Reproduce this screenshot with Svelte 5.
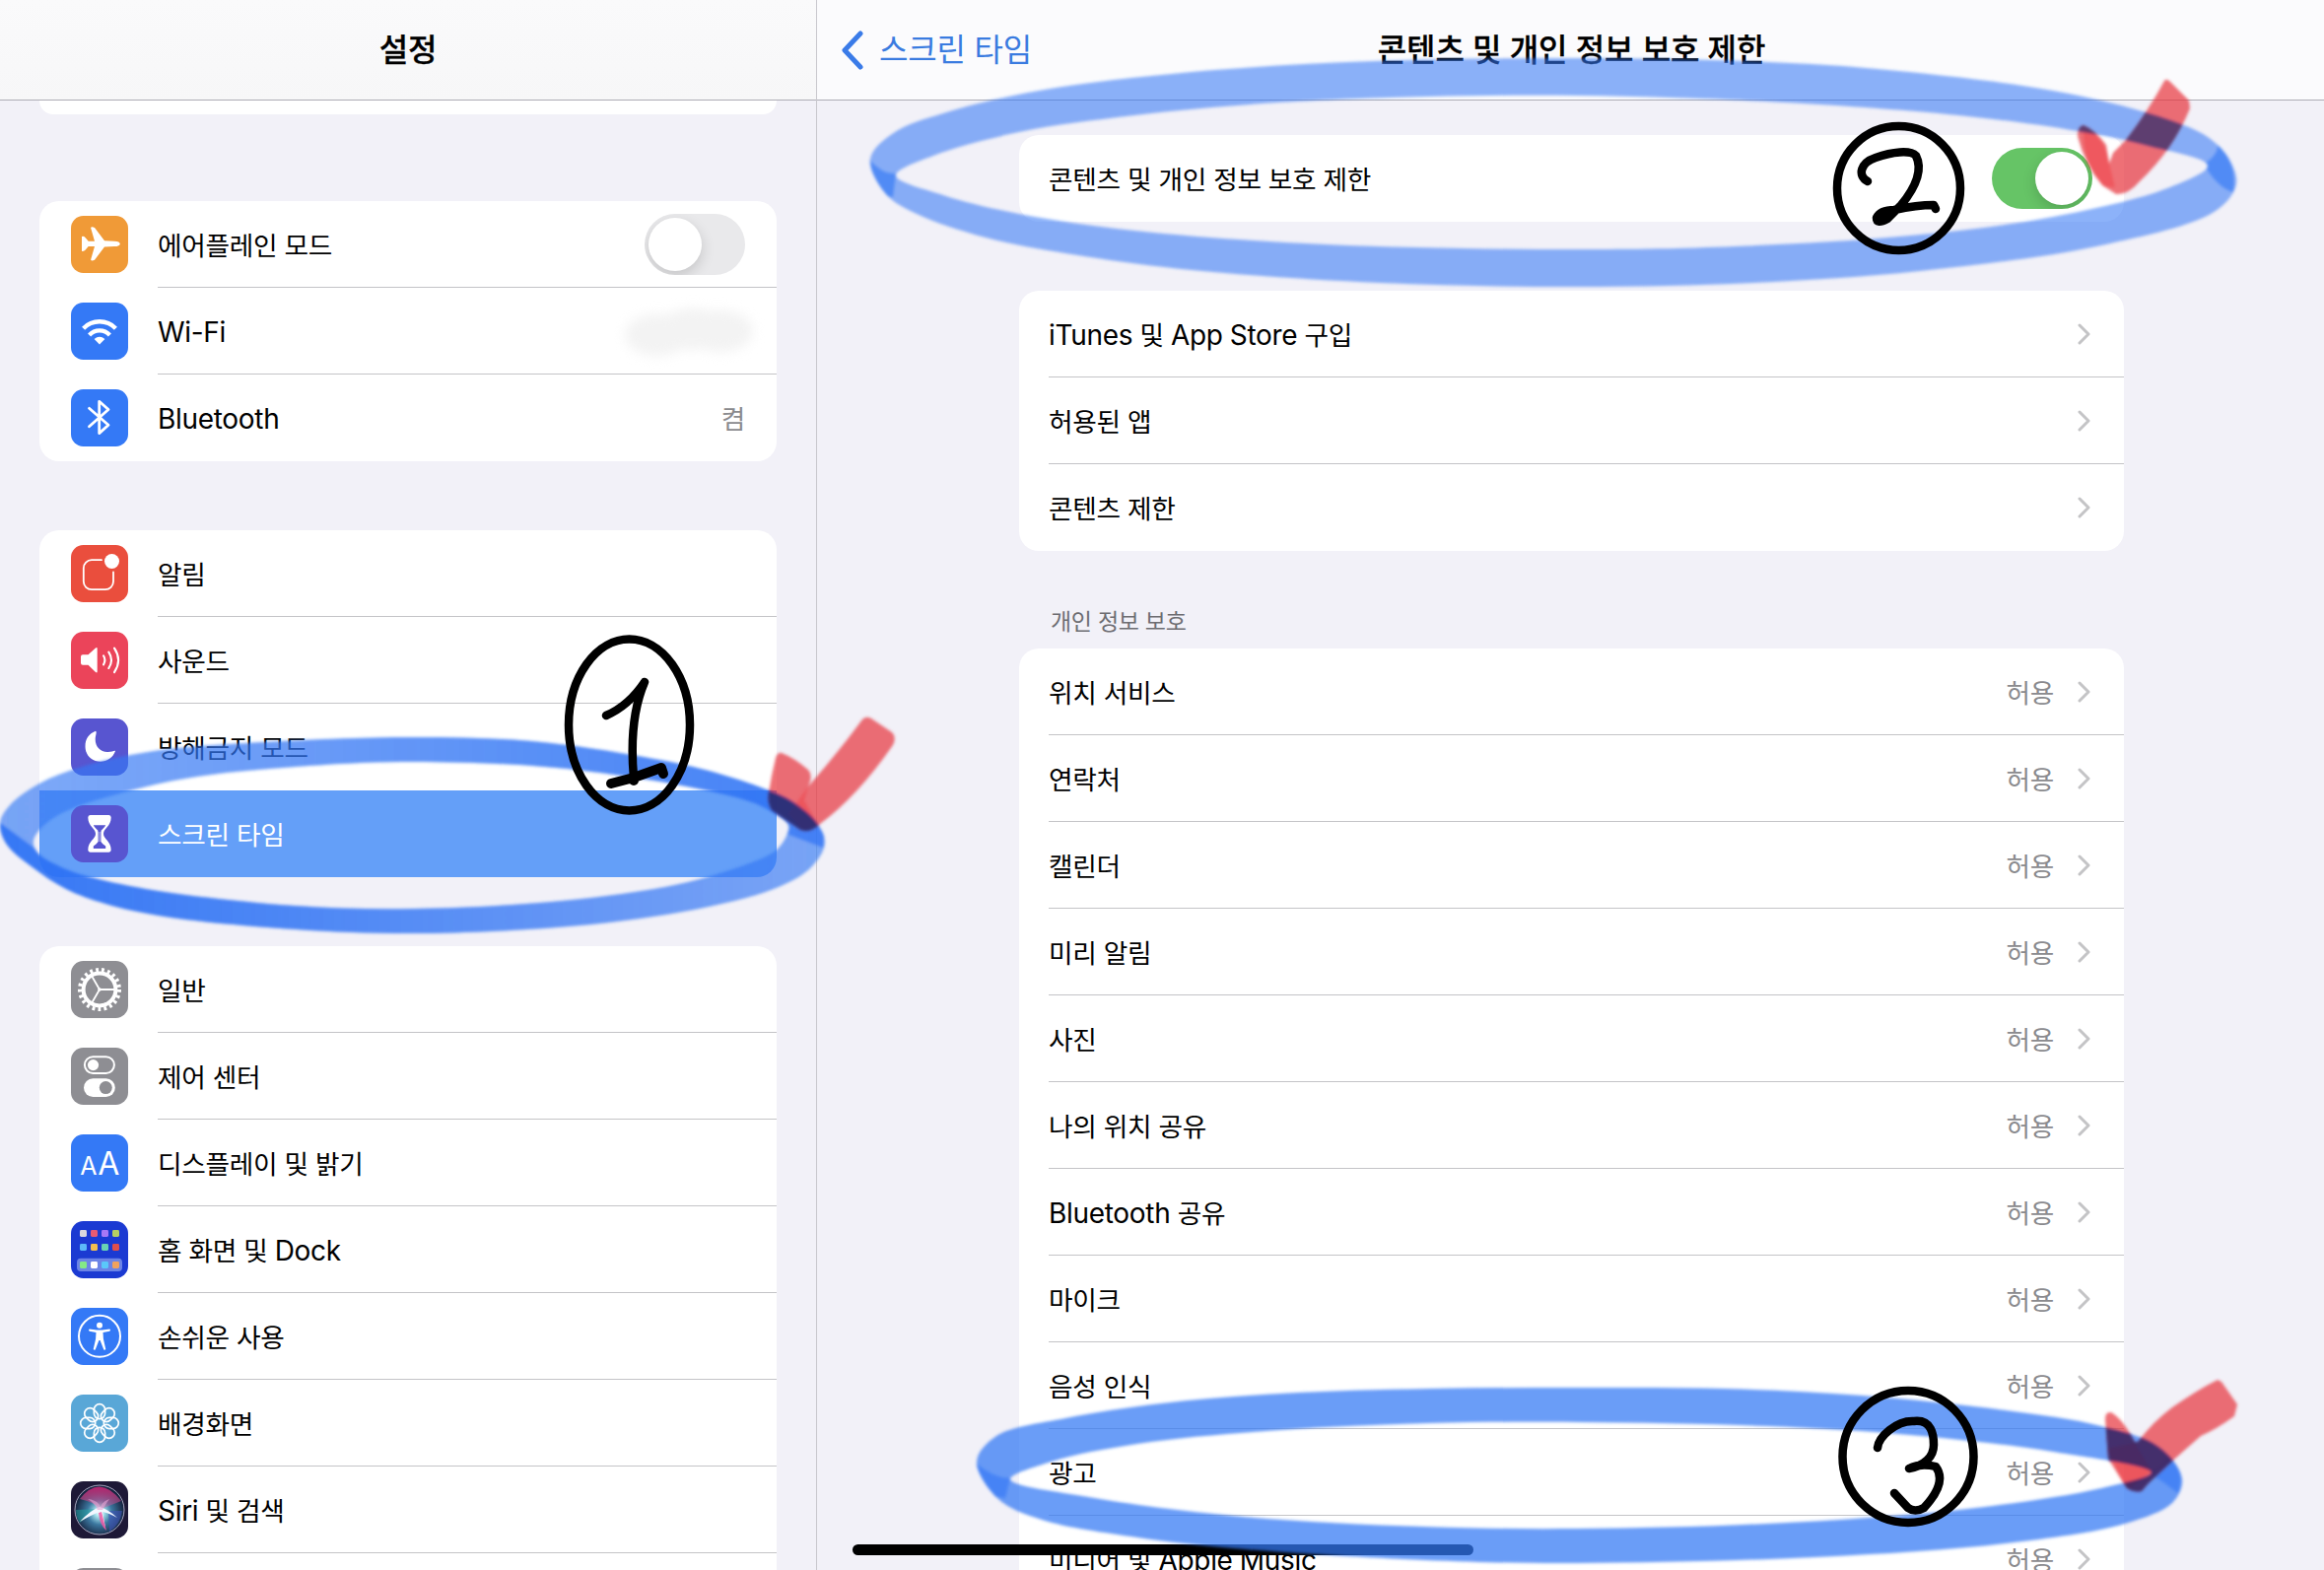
<div class="screen">
  <aside class="sidebar">
    <header class="bar">
      <h1>설정</h1>
    </header>
    <div class="sidebar-list">
      <div class="card card-cut"></div>
      {#each menu as group}
        <ul class="card">
          {#each group as item}
            <li class="row" class:selected={item.selected}>
              <svg class="icon" viewBox="0 0 58 58">
                <rect width="58" height="58" rx="12.5" fill={item.color} />
                {#if item.icon === 'plane'}
                  <path
                    fill="#fff"
                    d="M11 21q2-.7 3.5 1l3.2 3.8H24l-3.8-13.2q-.3-1.5 1.6-1.4l2.2.8 10 13.3 10 .4q5.8.3 5.8 2.700t-5.800 2.700l-10 .4-10 13.300-2.200.8q-1.900 0-1.600-1.400L24 31h-6.300l-3.200 3.800q-1.500 1.500-3.500 1z"
                  />
                {:else if item.icon === 'wifi'}
                  <g fill="none" stroke="#fff" stroke-width="4.3">
                    <path d="M12.6 26.2a22.8 22.8 0 0 1 32.8 0" />
                    <path d="M18.6 33a14.2 14.2 0 0 1 20.8 0" />
                  </g>
                  <path fill="#fff" d="M23.6 37q5.4-4.6 10.8 0L29 42.5z" />
                {:else if item.icon === 'bluetooth'}
                  <path
                    class="line"
                    stroke-width="2.8"
                    d="M18.5 19.3L38 36.3l-9.300 8.300V12.300L38 20.500 18.500 37.800"
                  />
                {:else if item.icon === 'bell'}
                  <path
                    class="line"
                    stroke-width="1.8"
                    d="M31 15.2H21a8.200 8.200 0 0 0-8.200 8.200V37A8.200 8.200 0 0 0 21 45.200h13.800A8.200 8.200 0 0 0 43 37V27.500"
                  />
                  <circle cx="41.5" cy="16.5" r="7.500" fill="#fff" />
                {:else if item.icon === 'sound'}
                  <path
                    fill="#fff"
                    d="M12 23.200h5.500l7.500-6.700q1.700-1.100 1.700.8v22.900q0 1.900-1.700.8l-7.500-7.200H12q-2 0-2-2v-6.600q0-2 2-2z"
                  />
                  <g class="line" stroke-width="2.1">
                    <path d="M33 24.300q2.800 4.500 0 9.100" />
                    <path d="M38.300 20.600q5.400 8.200 0 16.400" />
                    <path d="M44 16.600q8.200 12.200 0 24.500" />
                  </g>
                {:else if item.icon === 'moon'}
                  <path
                    fill="#fff"
                    d="M25 12.800C18 15.500 14.500 21 14.500 28.200c0 9 6.500 15.600 15.500 15.600 7 0 12.800-4.300 15-10.800-1-.9-3.500 1.300-8 1.100-7.500-.2-12.300-5.600-12.300-13.100 0-4 2-7.300.3-8.200z"
                  />
                {:else if item.icon === 'hourglass'}
                  <path
                    fill="#fff"
                    d="M19.500 10h19q2.200 0 2.200 2.500c0 9-7.700 11-7.700 16.400s7.700 7.400 7.700 16.400q0 2.400-2.200 2.400h-19q-2.200 0-2.200-2.400c0-9 7.700-11 7.700-16.400s-7.700-7.400-7.700-16.400Q17.300 10 19.500 10z"
                  />
                  <path
                    fill={item.color}
                    d="M22.800 20.200h12.400q-.7 1.600-4.600 5.600v11.400q1 1.800 4.600 4.200v2.500H22.800v-2.500q3.600-2.400 4.600-4.200V25.800q-3.900-4-4.600-5.600z"
                  />
                  <path stroke="#fff" stroke-width=".6" d="M28 27v10M30 27v10" />
                {:else if item.icon === 'gear'}
                  <g fill="none" stroke="#fff">
                    <circle cx="29" cy="29" r="16.400" stroke-width="4" />
                    <circle
                      cx="29"
                      cy="29"
                      r="20"
                      stroke-width="4"
                      stroke-dasharray="2.800 3.184"
                    />
                    <path
                      stroke-width="1.800"
                      d="M29 29h15M29 29l-7.500-13M29 29l-7.500 13"
                    />
                  </g>
                  <circle cx="29" cy="29" r="1.800" fill="#fff" />
                {:else if item.icon === 'switches'}
                  <rect class="line" x="13.900" y="9.200" width="30" height="16.800" rx="8.400" stroke-width="2" />
                  <circle cx="22.500" cy="17.600" r="5.600" fill="#fff" />
                  <rect x="13" y="31.300" width="31.800" height="18.700" rx="9.300" fill="#fff" />
                  <circle cx="35.300" cy="40.600" r="6.500" fill={item.color} />
                {:else if item.icon === 'text'}
                  <text x="9.200" y="41" font-size="25">A</text>
                  <text x="27.200" y="41" font-size="32">A</text>
                {:else if item.icon === 'home'}
                  <rect x="6" y="37.700" width="46" height="13.300" rx="4" fill="#6c84e6" />
                  {#each apps as app, i}
                    <rect
                      x={9 + (i % 4) * 11}
                      y={[9, 23, 41][Math.floor(i / 4)]}
                      width="7"
                      height="7"
                      rx="1.400"
                      fill={app}
                    />
                  {/each}
                {:else if item.icon === 'person'}
                  <circle class="line" cx="29" cy="28.800" r="21" stroke-width="2" />
                  <circle cx="29" cy="17.700" r="3" fill="#fff" />
                  <path
                    fill="#fff"
                    d="M18.700 21.500l7.500 1h5.600l7.500-1q1.500.9 0 2.300l-6.800 1.200.4 6.500 2.400 10.500q-1 1.500-2.100.2L29.600 33h-1.200l-3.600 9.200q-1.100 1.300-2.100-.2l2.400-10.500.4-6.500-6.800-1.200q-1.500-1.400 0-2.300z"
                  />
                {:else if item.icon === 'flower'}
                  {#each [0, 45, 90, 135, 180, 225, 270, 315] as angle}
                    <rect
                      class="line"
                      x="23.400"
                      y="9.700"
                      width="11.200"
                      height="15"
                      rx="5.600"
                      stroke-width="1.700"
                      transform="rotate({angle} 29 29)"
                    />
                  {/each}
                {:else if item.icon === 'siri'}
                  <defs>
                    <radialGradient id="orb" cx=".5" cy=".55" r=".5">
                      <stop offset="0" stop-color="#fff" />
                      <stop offset=".18" stop-color="#a9e5ee" />
                      <stop offset=".5" stop-color="#3c78a0" />
                      <stop offset="1" stop-color="#15233f" />
                    </radialGradient>
                    <linearGradient id="pink" x2="0" y2="1">
                      <stop offset="0" stop-color="#b52670" />
                      <stop offset="1" stop-color="#dd5b9c" stop-opacity=".3" />
                    </linearGradient>
                  </defs>
                  <circle cx="29" cy="29" r="25" fill="url(#orb)" />
                  <path fill="url(#pink)" d="M9 18Q29-8 51 20q-10 4-20 8-10-8-22-10z" />
                  <path fill="#3f54b8" opacity=".6" d="M38 30l14 0q-2 14-13 21z" />
                  <path fill="#22a9a5" opacity=".5" d="M27 28L5 29q0 8 4 13z" />
                  <path fill="#f2f7ff" d="M9 41Q20 29 29 26q10 3 18 11-9-5-15-6l3 16Q31 38 29 31q-8 3-20 10z" />
                  <path fill="#f05ba6" opacity=".85" d="M31 31l5 19q-7-6-8-18z" />
                  <path fill="#e8a3d3" opacity=".6" d="M17 18q10 1 13 8 2-6 9-8-5 7-7 11h-5q-3-7-10-11z" />
                  <circle cx="29" cy="29" r="25" fill="none" stroke="#a8a6bf" stroke-width="1" />
                {/if}
              </svg>
              <div class="row-body">
                {@render text(item.label)}
                {#if item.toggle}
                  <span class="switch"><i></i></span>
                {:else if item.smudge}
                  <span class="smudge"><i></i><i></i><i></i></span>
                {:else if item.value}
                  <span class="value">{item.value}</span>
                {/if}
              </div>
            </li>
          {/each}
        </ul>
      {/each}
    </div>
  </aside>

  <main class="detail">
    <header class="bar detail-bar">
      <a class="back" href="#back">
        <svg viewBox="0 0 24 40"><path d="M20 3L4 20l16 17" /></svg>
        스크린 타임
      </a>
      <h1>콘텐츠 및 개인 정보 보호 제한</h1>
    </header>
    <div class="detail-list">
      <div class="card">
        <div class="row">
          <div class="row-body">
            {@render text('콘텐츠 및 개인 정보 보호 제한')}
            <span class="switch on"><i></i></span>
          </div>
        </div>
      </div>
      <ul class="card">
        {#each store as label}
          <li class="row">
            <div class="row-body">
              {@render text(label)}
              <svg class="chevron" viewBox="0 0 14 22"><path d="M2 2l9 9-9 9" /></svg>
            </div>
          </li>
        {/each}
      </ul>
      <h2>개인 정보 보호</h2>
      <ul class="card">
        {#each privacy as label}
          <li class="row">
            <div class="row-body">
              {@render text(label)}
              <span class="value">허용</span>
              <svg class="chevron" viewBox="0 0 14 22"><path d="M2 2l9 9-9 9" /></svg>
            </div>
          </li>
        {/each}
      </ul>
    </div>
  </main>

  <div class="home-bar"></div>

  <!-- marker strokes on top of the screen -->
  <svg class="marks" viewBox="0 0 2358 1593">
    <defs>
      <filter id="soft" x="-5%" y="-5%" width="110%" height="110%">
        <feGaussianBlur stdDeviation="1.8" />
      </filter>
      {#each rings as ring, i}
        <clipPath id="ring{i}">
          <path clip-rule="evenodd" d={smooth(ring.outer) + smooth(ring.inner)} />
        </clipPath>
      {/each}
      <linearGradient id="to-right">
        <stop offset="0" stop-color="#2b70f4" stop-opacity="0" />
        <stop offset=".5" stop-color="#2b70f4" stop-opacity=".35" />
        <stop offset="1" stop-color="#2b70f4" stop-opacity=".7" />
      </linearGradient>
      <linearGradient id="to-left">
        <stop offset="0" stop-color="#2b70f4" stop-opacity=".85" />
        <stop offset=".5" stop-color="#2b70f4" stop-opacity=".45" />
        <stop offset="1" stop-color="#2b70f4" stop-opacity="0" />
      </linearGradient>
    </defs>
    {#each rings as ring, i}
      <g filter="url(#soft)">
        <path
          fill-rule="evenodd"
          fill="#3478f4"
          fill-opacity={ring.opacity}
          d={smooth(ring.outer) + smooth(ring.inner)}
        />
        {#each ring.shades as shade}
          <path fill={shade.fill} clip-path="url(#ring{i})" d={shade.d} />
        {/each}
      </g>
    {/each}
    {#each checks as check, i}
      <g filter="url(#soft)">
        <path fill="#e7343d" fill-opacity=".7" d={check.shape} />
        <path fill="#f0282d" fill-opacity=".35" d={check.fold} />
        <path fill={check.mix} clip-path="url(#ring{i})" d={check.shape} />
      </g>
    {/each}
    <g class="ink">
      <ellipse cx="638.5" cy="735.5" rx="61.5" ry="87" />
      <path d="M615 726Q638 716 654 692C642 720 640 755 643 789" />
      <path stroke-width="10" d="M620 795L643 789 671 779 673 785M643 789v3" />
      <ellipse cx="1926.5" cy="191" rx="62.5" ry="63" />
      <path
        d="M1895 184C1884 178 1888 165 1903 160 1920 154 1938 152 1944 158 1952 174 1942 192 1929 208L1915 222Q1904 228 1904 221 1908 213 1922 213 1945 208 1962 208L1964 212"
      />
      <ellipse cx="1936" cy="1478" rx="66.5" ry="67" />
      <path
        d="M1905 1469C1906 1458 1924 1441 1942 1442 1960 1440 1962 1456 1962 1466 1962 1478 1953 1487 1937 1490 1945 1486 1956 1486 1964 1488 1973 1500 1966 1515 1952 1530Q1943 1535 1936 1530L1922 1515"
      />
    </g>
  </svg>
</div>

{#snippet text(label)}
  <span class="label">{#each label.split(/([A-Za-z-]+)/) as part, i}<span class:latin={i % 2}>{part}</span>{/each}</span>
{/snippet}

<script>
  const menu = [
    [
      { icon: 'plane', color: '#f09a37', label: '에어플레인 모드', toggle: true },
      { icon: 'wifi', color: '#3479f6', label: 'Wi-Fi', smudge: true },
      { icon: 'bluetooth', color: '#3479f6', label: 'Bluetooth', value: '켬' },
    ],
    [
      { icon: 'bell', color: '#ea4e3d', label: '알림' },
      { icon: 'sound', color: '#eb445a', label: '사운드' },
      { icon: 'moon', color: '#5855d0', label: '방해금지 모드' },
      { icon: 'hourglass', color: '#5855d0', label: '스크린 타임', selected: true },
    ],
    [
      { icon: 'gear', color: '#8e8e93', label: '일반' },
      { icon: 'switches', color: '#8e8e93', label: '제어 센터' },
      { icon: 'text', color: '#3479f6', label: '디스플레이 및 밝기' },
      { icon: 'home', color: '#1b3ad2', label: '홈 화면 및 Dock' },
      { icon: 'person', color: '#3479f6', label: '손쉬운 사용' },
      { icon: 'flower', color: '#59a7d7', label: '배경화면' },
      { icon: 'siri', color: '#1e1937', label: 'Siri 및 검색' },
      { icon: 'blank', color: '#8e8e93', label: '' },
    ],
  ];

  const apps = [
    '#d9d9de', '#e85b73', '#a878f6', '#b6cf63',
    '#5cb9f9', '#f3c04f', '#69d3b3', '#e04f4b',
    '#84e987', '#ffffff', '#5ac8fa', '#f1a25e',
  ];

  const store = ['iTunes 및 App Store 구입', '허용된 앱', '콘텐츠 제한'];

  const privacy = [
    '위치 서비스',
    '연락처',
    '캘린더',
    '미리 알림',
    '사진',
    '나의 위치 공유',
    'Bluetooth 공유',
    '마이크',
    '음성 인식',
    '광고',
    '미디어 및 Apple Music',
  ];

  const rings = [
    {
      opacity: 0.64,
      outer: [
        [0, 835], [10, 817], [40, 795], [83, 778], [150, 763], [233, 755],
        [408, 748], [540, 752], [653, 768], [719, 782], [780, 802], [803, 813],
        [827, 833], [837, 855], [823, 880], [790, 900], [719, 920], [600, 938],
        [430, 947], [300, 943], [167, 930], [107, 917], [67, 902], [33, 880],
        [7, 857],
      ],
      inner: [
        [34, 853], [44, 838], [67, 823], [133, 802], [200, 788], [300, 778],
        [408, 773], [540, 777], [630, 787], [707, 800], [760, 813], [780, 822],
        [800, 837], [798, 848], [787, 863], [760, 876], [689, 897], [570, 914],
        [420, 922], [300, 919], [167, 905], [100, 892], [67, 882], [38, 865],
      ],
      shades: [
        { fill: 'url(#to-right)', d: 'M0 835L45 868H400L798 846 835 860 845 740H0z' },
        { fill: 'url(#to-left)', d: 'M0 835L45 868H400L798 846 835 860 840 950H0z' },
      ],
    },
    {
      opacity: 0.57,
      outer: [
        [883, 161], [908, 134], [957, 115], [1054, 92], [1209, 73], [1393, 62],
        [1600, 59], [1770, 62], [1905, 70], [2083, 92], [2190, 118], [2240, 139],
        [2262, 162], [2269, 187], [2248, 214], [2132, 249], [1948, 275],
        [1779, 287], [1600, 291], [1400, 287], [1209, 274], [1100, 260],
        [1000, 241], [930, 217], [899, 197],
      ],
      inner: [
        [909, 178], [947, 158], [1034, 134], [1151, 117], [1296, 104], [1450, 98],
        [1600, 97], [1793, 103], [1987, 117], [2108, 133], [2180, 148], [2240, 168],
        [2199, 191], [2083, 220], [1938, 239], [1760, 250], [1600, 253],
        [1345, 248], [1151, 234], [1034, 217], [957, 198],
      ],
      shades: [
        { fill: '#2f74f599', d: 'M880 160Q896 178 909 176L906 200 896 198Q884 182 880 160z' },
        { fill: '#2f74f599', d: 'M2236 166Q2249 160 2251 146 2270 166 2266 195 2249 190 2236 166z' },
      ],
    },
    {
      opacity: 0.73,
      outer: [
        [991, 1483], [1011, 1457], [1081, 1439], [1178, 1424], [1299, 1414],
        [1450, 1409], [1600, 1408], [1750, 1409], [1890, 1416], [2035, 1431],
        [2132, 1447], [2190, 1468], [2214, 1500], [2205, 1524], [2156, 1546],
        [2035, 1566], [1842, 1580], [1600, 1586], [1445, 1583], [1251, 1571],
        [1154, 1560], [1057, 1542], [1013, 1521],
      ],
      inner: [
        [1025, 1501], [1067, 1483], [1154, 1465], [1299, 1451], [1450, 1444],
        [1600, 1443], [1793, 1447], [1938, 1456], [2083, 1473], [2183, 1494],
        [2132, 1510], [1987, 1532], [1793, 1546], [1600, 1551], [1445, 1549],
        [1251, 1538], [1105, 1519],
      ],
      shades: [
        { fill: '#2f74f599', d: 'M988 1483Q1008 1500 1025 1500L1020 1520 1008 1518Q996 1500 988 1483z' },
        { fill: '#2f74f599', d: 'M2180 1494Q2197 1490 2199 1472 2218 1492 2210 1515 2196 1504 2180 1494z' },
      ],
    },
  ];

  const checks = [
    {
      mix: '#0c2a7ccc',
      shape:
        'M793 764Q806 769 820 781 824 785 822 793L820 798Q850 764 875 730 879 726 884 729L905 743Q910 748 906 756 870 808 832 836 822 846 812 842L783 822Q778 814 780 804 783 785 787 769 789 763 793 764z',
      fold: 'M820 798L800 826 815 842 830 838 816 812z',
    },
    {
      mix: '#34356fb8',
      shape:
        'M2114 127Q2126 132 2137 147L2140 166 2144 155 2157 142Q2180 112 2196 82 2198 79 2202 83L2221 102 2222 110Q2205 152 2171 184 2159 198 2147 197L2133 188Q2115 167 2108 138 2108 128 2114 127z',
      fold: 'M2114 128Q2137 140 2140 166L2146 190 2135 189Q2112 166 2114 128z',
    },
    {
      mix: '#0c2268b0',
      shape:
        'M2142 1433Q2154 1440 2166 1463L2169 1463Q2185 1442 2204 1428 2230 1410 2250 1400L2254 1402 2270 1425 2267 1437Q2249 1450 2233 1457 2206 1480 2180 1505L2173 1513Q2166 1515 2158 1510L2154 1504 2139 1480 2136 1440Q2136 1432 2142 1433z',
      fold: 'M2138 1470L2154 1504 2160 1511 2183 1493 2166 1464z',
    },
  ];

  // closed centripetal catmull-rom curve through the points
  function smooth(points) {
    const n = points.length;
    const dist = (p, q) => Math.hypot(p[0] - q[0], p[1] - q[1]);
    const handle = (far, near, next, d1, d2) =>
      [0, 1].map((k) => {
        const r1 = Math.sqrt(d1);
        const r2 = Math.sqrt(d2);
        const mid = (2 * d1 + 3 * r1 * r2 + d2) * near[k];
        return ((d1 * next[k] - d2 * far[k] + mid) / (3 * r1 * (r1 + r2))).toFixed(1);
      });

    let d = `M${points[0]}`;
    for (let i = 0; i < n; i++) {
      const [a, b, c, e] = [-1, 0, 1, 2].map((k) => points[(i + k + n) % n]);
      const d1 = dist(a, b);
      const d2 = dist(b, c);
      const d3 = dist(c, e);
      d += `C${handle(a, b, c, d1, d2)} ${handle(e, c, b, d3, d2)} ${c}`;
    }
    return d + 'Z';
  }
</script>

<style>
  :global(body) {
    background: #f2f1f8;
  }

  .screen {
    position: relative;
    display: flex;
    width: 2358px;
    height: 1593px;
    overflow: hidden;
    background: #f2f1f8;
    color: #000;
    font-family: Inter, 'Noto Sans CJK KR', sans-serif;
    font-size: 26.7px;
    line-height: 40px;
    letter-spacing: -0.3px;
  }

  ul {
    list-style: none;
    margin: 0;
    padding: 0;
  }

  .sidebar {
    flex: 0 0 829px;
    box-sizing: border-box;
    border-right: 1px solid #c8c7cd;
  }
  .detail {
    flex: 1 1 auto;
  }

  .bar {
    display: flex;
    align-items: center;
    justify-content: center;
    box-sizing: border-box;
    height: 102px;
    border-bottom: 1px solid #adacb5;
    background: linear-gradient(#fafafb, #f7f7f8);
  }
  .detail-bar {
    display: grid;
    grid-template-columns: 1fr auto 1fr;
    background: #fbfbfd;
  }
  h1 {
    margin: 0;
    font-size: 32px;
    font-weight: 500;
    letter-spacing: -0.15px;
    -webkit-text-stroke: 0.3px #000;
  }
  .detail-bar h1 {
    padding-left: 2px;
  }
  .back {
    display: flex;
    align-items: center;
    gap: 15px;
    padding-left: 24px;
    color: #3a7be0;
    font-size: 32px;
    letter-spacing: -0.2px;
    text-decoration: none;
  }
  .back svg {
    width: 24px;
    height: 40px;
    fill: none;
    stroke: #3a7be8;
    stroke-width: 5;
    stroke-linecap: round;
    stroke-linejoin: round;
  }

  .sidebar-list {
    display: flex;
    flex-direction: column;
    gap: 70px;
    padding: 0 40px;
  }
  .detail-list {
    display: flex;
    flex-direction: column;
    gap: 70px;
    padding: 35px 203px 0 205px;
  }
  h2 {
    margin: 0 0 -62px;
    padding: 0 32px;
    height: 21px;
    color: #6d6d72;
    font-size: 23px;
    font-weight: 400;
    line-height: 5px;
  }

  .card {
    border-radius: 20px;
    background: #fff;
    overflow: hidden;
  }
  .card-cut {
    height: 14px;
    margin-bottom: 18px;
    border-radius: 0 0 20px 20px;
  }
  .row {
    display: flex;
    align-items: center;
    height: 88px;
    padding-left: 30px;
  }
  .row-body {
    flex: 1 1 auto;
    display: flex;
    align-items: center;
    box-sizing: border-box;
    height: 88px;
    padding-right: 32px;
    border-bottom: 1px solid #c4c4c7;
  }
  .label {
    flex: 1 1 auto;
    padding-top: 3px;
    white-space: pre;
  }
  .latin {
    font-size: 28px;
  }
  .row:last-child .row-body,
  .row:has(+ .selected) .row-body {
    border-bottom-color: transparent;
  }
  .selected {
    background: #649ff8;
    color: #fff;
  }
  .icon {
    flex: none;
    width: 58px;
    height: 58px;
    margin: 0 30px 0 2px;
  }
  .icon text {
    fill: #fff;
    font-family: Inter, sans-serif;
    font-weight: 400;
  }
  .line {
    fill: none;
    stroke: #fff;
    stroke-linecap: round;
    stroke-linejoin: round;
  }
  .value {
    padding-top: 3px;
    color: #8a8a8e;
  }
  .chevron {
    width: 14px;
    height: 22px;
    margin-left: 24px;
    margin-right: 1px;
    fill: none;
    stroke: #c4c4c6;
    stroke-width: 3;
    stroke-linecap: round;
    stroke-linejoin: round;
  }

  .switch {
    display: flex;
    box-sizing: border-box;
    width: 102px;
    height: 62px;
    padding: 4px;
    border-radius: 31px;
    background: #e9e9eb;
    overflow: hidden;
  }
  .switch i {
    width: 54px;
    height: 54px;
    border-radius: 50%;
    background: #fff;
    box-shadow: 0 5px 14px rgba(0, 0, 0, 0.16);
  }
  .switch.on {
    justify-content: flex-end;
    background: #66c466;
  }

  .smudge {
    display: flex;
    align-items: center;
    margin-right: -8px;
    filter: blur(6px);
  }
  .smudge i {
    width: 66px;
    height: 42px;
    margin-left: -38px;
    border-radius: 50%;
    background: #f3f3f3;
  }
  .smudge i:first-child {
    transform: translate(-8px, 4px);
  }
  .smudge i:nth-child(2) {
    transform: translateY(-2px);
  }

  .home-bar {
    position: absolute;
    left: 865px;
    top: 1567px;
    width: 630px;
    height: 11px;
    border-radius: 6px;
    background: #000;
  }

  .marks {
    position: absolute;
    inset: 0;
    width: 2358px;
    height: 1593px;
    pointer-events: none;
  }
  .ink {
    fill: none;
    stroke: #000;
    stroke-width: 8.5;
    stroke-linecap: round;
    stroke-linejoin: round;
  }
</style>
